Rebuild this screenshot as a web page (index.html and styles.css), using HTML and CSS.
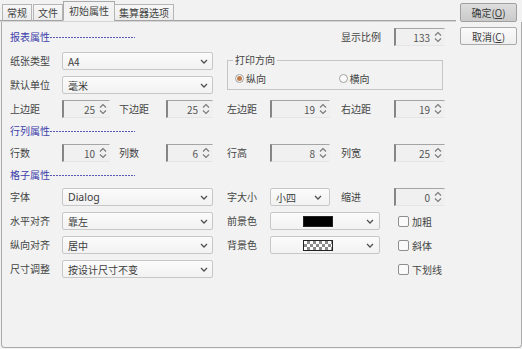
FILE: index.html
```html
<!DOCTYPE html>
<html lang="zh">
<head>
<meta charset="utf-8">
<title>初始属性</title>
<link rel="stylesheet" href="styles.css">
</head>
<body>
<div class="window">
  <div class="tabbar">
    <div class="tabs">
      <div class="tab">常规</div>
      <div class="tab">文件</div>
      <div class="tab active">初始属性</div>
      <div class="tab">集算器选项</div>
    </div>
  </div>

  <div class="buttons">
    <button class="btn default">确定(<u>O</u>)</button>
    <button class="btn">取消(<u>C</u>)</button>
  </div>

  <div class="panel">
    <div class="form">
      <!-- row 0 -->
      <div class="sec r0"><span>报表属性</span><i class="dash"></i></div>
      <div class="lbl c7 r0">显示比例</div>
      <div class="spin c8 r0"><span>133</span><svg class="arr" width="8" height="14" viewBox="0 0 8 14"><path d="M1 5.5L4 2.5L7 5.5M1 8.5L4 11.5L7 8.5"/></svg></div>

      <!-- row 1 -->
      <div class="lbl c1 r1">纸张类型</div>
      <div class="combo c2-4 r1"><span>A4</span><svg class="chev" width="8" height="5" viewBox="0 0 8 5"><path d="M1 1L4 4L7 1"/></svg></div>
      <fieldset class="group">
        <legend>打印方向</legend>
        <div class="radios">
          <label class="radio"><i class="dot on"></i>纵向</label>
          <label class="radio"><i class="dot"></i>横向</label>
        </div>
      </fieldset>

      <!-- row 2 -->
      <div class="lbl c1 r2">默认单位</div>
      <div class="combo c2-4 r2"><span>毫米</span><svg class="chev" width="8" height="5" viewBox="0 0 8 5"><path d="M1 1L4 4L7 1"/></svg></div>

      <!-- row 3 -->
      <div class="lbl c1 r3">上边距</div>
      <div class="spin c2 r3"><span>25</span><svg class="arr" width="8" height="14" viewBox="0 0 8 14"><path d="M1 5.5L4 2.5L7 5.5M1 8.5L4 11.5L7 8.5"/></svg></div>
      <div class="lbl c3 r3">下边距</div>
      <div class="spin c4 r3"><span>25</span><svg class="arr" width="8" height="14" viewBox="0 0 8 14"><path d="M1 5.5L4 2.5L7 5.5M1 8.5L4 11.5L7 8.5"/></svg></div>
      <div class="lbl c5 r3">左边距</div>
      <div class="spin c6 r3"><span>19</span><svg class="arr" width="8" height="14" viewBox="0 0 8 14"><path d="M1 5.5L4 2.5L7 5.5M1 8.5L4 11.5L7 8.5"/></svg></div>
      <div class="lbl c7 r3">右边距</div>
      <div class="spin c8 r3"><span>19</span><svg class="arr" width="8" height="14" viewBox="0 0 8 14"><path d="M1 5.5L4 2.5L7 5.5M1 8.5L4 11.5L7 8.5"/></svg></div>

      <!-- row 4 -->
      <div class="sec r4"><span>行列属性</span><i class="dash"></i></div>

      <!-- row 5 -->
      <div class="lbl c1 r5">行数</div>
      <div class="spin c2 r5"><span>10</span><svg class="arr" width="8" height="14" viewBox="0 0 8 14"><path d="M1 5.5L4 2.5L7 5.5M1 8.5L4 11.5L7 8.5"/></svg></div>
      <div class="lbl c3 r5">列数</div>
      <div class="spin c4 r5"><span>6</span><svg class="arr" width="8" height="14" viewBox="0 0 8 14"><path d="M1 5.5L4 2.5L7 5.5M1 8.5L4 11.5L7 8.5"/></svg></div>
      <div class="lbl c5 r5">行高</div>
      <div class="spin c6 r5"><span>8</span><svg class="arr" width="8" height="14" viewBox="0 0 8 14"><path d="M1 5.5L4 2.5L7 5.5M1 8.5L4 11.5L7 8.5"/></svg></div>
      <div class="lbl c7 r5">列宽</div>
      <div class="spin c8 r5"><span>25</span><svg class="arr" width="8" height="14" viewBox="0 0 8 14"><path d="M1 5.5L4 2.5L7 5.5M1 8.5L4 11.5L7 8.5"/></svg></div>

      <!-- row 6 -->
      <div class="sec r6"><span>格子属性</span><i class="dash"></i></div>

      <!-- row 7 -->
      <div class="lbl c1 r7">字体</div>
      <div class="combo c2-4 r7"><span class="latin">Dialog</span><svg class="chev" width="8" height="5" viewBox="0 0 8 5"><path d="M1 1L4 4L7 1"/></svg></div>
      <div class="lbl c5 r7">字大小</div>
      <div class="combo small c6 r7"><span>小四</span><svg class="chev" width="8" height="5" viewBox="0 0 8 5"><path d="M1 1L4 4L7 1"/></svg></div>
      <div class="lbl c7 r7">缩进</div>
      <div class="spin c8 r7"><span>0</span><svg class="arr" width="8" height="14" viewBox="0 0 8 14"><path d="M1 5.5L4 2.5L7 5.5M1 8.5L4 11.5L7 8.5"/></svg></div>

      <!-- row 8 -->
      <div class="lbl c1 r8">水平对齐</div>
      <div class="combo c2-4 r8"><span>靠左</span><svg class="chev" width="8" height="5" viewBox="0 0 8 5"><path d="M1 1L4 4L7 1"/></svg></div>
      <div class="lbl c5 r8">前景色</div>
      <div class="combo color c6-7 r8"><i class="swatch black"></i><svg class="chev" width="8" height="5" viewBox="0 0 8 5"><path d="M1 1L4 4L7 1"/></svg></div>
      <label class="check c8 r8"><i class="box"></i>加粗</label>

      <!-- row 9 -->
      <div class="lbl c1 r9">纵向对齐</div>
      <div class="combo c2-4 r9"><span>居中</span><svg class="chev" width="8" height="5" viewBox="0 0 8 5"><path d="M1 1L4 4L7 1"/></svg></div>
      <div class="lbl c5 r9">背景色</div>
      <div class="combo color c6-7 r9"><i class="swatch checker"></i><svg class="chev" width="8" height="5" viewBox="0 0 8 5"><path d="M1 1L4 4L7 1"/></svg></div>
      <label class="check c8 r9"><i class="box"></i>斜体</label>

      <!-- row 10 -->
      <div class="lbl c1 r10">尺寸调整</div>
      <div class="combo c2-4 r10"><span>按设计尺寸不变</span><svg class="chev" width="8" height="5" viewBox="0 0 8 5"><path d="M1 1L4 4L7 1"/></svg></div>
      <label class="check c8 r10"><i class="box"></i>下划线</label>
    </div>
  </div>
</div>
</body>
</html>
```

FILE: styles.css
```css
* { box-sizing: border-box; }

html, body {
  margin: 0;
  padding: 0;
  background: #f1f2f1;
}

body {
  font-family: "Noto Sans CJK SC", "Noto Sans", sans-serif;
  font-size: 10px;
  color: #3c3c3c;
}

.window {
  width: 522px;
  height: 349px;
  display: grid;
  grid-template-columns: 456px 66px;
  grid-template-rows: 22px 326px;
  background: #f1f2f1;
}

/* ---------- tabs ---------- */
.tabbar {
  grid-column: 1;
  grid-row: 1;
  height: 22px;
  border-bottom: 1px solid #d3d4d3;
}

.tabs {
  height: 21px;
  display: flex;
  align-items: flex-end;
  padding-left: 2px;
  border-bottom: 1px solid #a2a3a2;
}

.tab {
  height: 17px;
  margin-bottom: -1px;
  padding: 0 4px;
  border: 1px solid #b4b5b4;
  border-bottom: 1px solid #a2a3a2;
  background: linear-gradient(#f7f7f7, #ebeceb);
  line-height: 15px;
  color: #444;
  margin-right: 1px;
}

.tab.active {
  height: 20px;
  margin-right: 0;
  margin-left: -1px;
  padding: 0 5px;
  background: #f1f2f1;
  border-color: #a9aaa9;
  border-bottom: 1px solid #f1f2f1;
  line-height: 17px;
}
.tab.active + .tab { margin-left: -1px; }

/* ---------- buttons ---------- */
.buttons {
  grid-column: 2;
  grid-row: 1 / 3;
  align-self: start;
  z-index: 1;
  display: flex;
  flex-direction: column;
  gap: 5px;
  padding: 3px 0 0 4px;
}

.btn {
  width: 57px;
  height: 18px;
  padding: 0;
  font: inherit;
  color: #3c3c3c;
  border: 1px solid #a9aaa9;
  border-radius: 2px;
  background: linear-gradient(#fafafa, #efefef);
  line-height: 15px;
}

.btn.default {
  height: 19px;
  background: linear-gradient(#dcdddc, #c9cac9);
  border-color: #9fa09f;
}

/* ---------- panel ---------- */
.panel {
  grid-column: 1 / 3;
  grid-row: 2;
  margin-left: 1px;
  border: 1px solid #a9aaa9;
  border-top: none;
  border-radius: 0 0 4px 4px;
}

.form {
  display: grid;
  grid-template-columns: 52px 48px 56px 47px 57px 60px 64px 51px;
  grid-template-rows: 18px 18px 18px 18px 14px 18px 14px 18px 18px 18px 18px;
  row-gap: 6px;
  padding: 6px 0 0 8px;
}

.r0 { grid-row: 1; }
.r1 { grid-row: 2; }
.r2 { grid-row: 3; }
.r3 { grid-row: 4; }
.r4 { grid-row: 5; }
.r5 { grid-row: 6; }
.r6 { grid-row: 7; }
.r7 { grid-row: 8; }
.r8 { grid-row: 9; }
.r9 { grid-row: 10; }
.r10 { grid-row: 11; }

.c1 { grid-column: 1; }
.c2 { grid-column: 2; }
.c3 { grid-column: 3; padding-left: 9px; }
.c4 { grid-column: 4; }
.c5 { grid-column: 5; padding-left: 14px; }
.c6 { grid-column: 6; }
.c7 { grid-column: 7; padding-left: 11px; }
.c8 { grid-column: 8; }
.c2-4 { grid-column: 2 / 5; }
.c6-7 { grid-column: 6 / 8; margin-right: 14px; }

.lbl {
  line-height: 18px;
  white-space: nowrap;
  color: #444;
}

/* section headings */
.sec {
  grid-column: 1 / 5;
  width: 125px;
  display: flex;
  align-items: center;
  color: #3d3dab;
  line-height: 14px;
}
.sec.r0 { line-height: 18px; }
.sec .dash {
  flex: 1;
  height: 1px;
  margin-top: 1px;
  background: repeating-linear-gradient(to right, #5a5ab4 0 2px, transparent 2px 3px);
}

/* spinner */
.spin {
  display: flex;
  align-items: center;
  justify-content: flex-end;
  height: 18px;
  background: #eff0ef;
  border: 1px solid;
  border-color: #a4a5a4 #eff0ef #e4e5e4 #848584;
  border-left-width: 2px;
  color: #555;
  padding-right: 2px;
}
.spin .arr {
  margin-left: 4px;
  fill: none;
  stroke: #7a7a7a;
  stroke-width: 1.2;
}

/* combo */
.combo {
  display: flex;
  align-items: center;
  justify-content: space-between;
  height: 18px;
  padding: 0 4px 0 5px;
  border: 1px solid #c6c7c6;
  border-radius: 2px;
  background: linear-gradient(#fbfbfb, #f1f2f1);
  color: #3c3c3c;
  white-space: nowrap;
}
.combo .chev {
  fill: none;
  stroke: #505050;
  stroke-width: 1.3;
  flex: none;
}
.combo.small { padding-right: 7px; }
.latin { font-family: "Noto Sans", sans-serif; font-size: 10.5px; }

.combo.color {
  padding: 0 5px 0 32px;
}
.swatch {
  display: block;
  width: 30px;
  height: 11px;
  border: 1px solid #222;
}
.swatch.black { background: #000; }
.swatch.checker {
  background-color: #fff;
  background-image:
    linear-gradient(45deg, #8a8a8a 25%, transparent 25%, transparent 75%, #8a8a8a 75%),
    linear-gradient(45deg, #8a8a8a 25%, transparent 25%, transparent 75%, #8a8a8a 75%);
  background-size: 6px 6px;
  background-position: 0 0, 3px 3px;
}

/* print direction group */
.group {
  grid-column: 5 / 9;
  grid-row: 2 / 4;
  align-self: start;
  margin: 2px 2px 0 14px;
  height: 36px;
  padding: 0 0 0 5px;
  border: 1px solid #c4c5c4;
  min-width: 0;
}
.group legend {
  padding: 0 2px;
  line-height: 12px;
  color: #444;
}
.radios {
  display: flex;
  align-items: center;
  height: 18px;
  margin-top: 3px;
  padding-left: 2px;
}
.radio {
  display: flex;
  align-items: center;
  gap: 2px;
  width: 104px;
  color: #444;
}
.dot {
  width: 9px;
  height: 9px;
  border: 1px solid #a0a1a0;
  border-radius: 50%;
  background: #fbfbfb;
  display: flex;
  align-items: center;
  justify-content: center;
}
.dot.on::after {
  content: "";
  width: 5px;
  height: 5px;
  border-radius: 50%;
  background: #bf7c4a;
}

/* checkbox */
.check {
  display: flex;
  align-items: center;
  gap: 3px;
  padding-left: 4px;
  color: #444;
}
.box {
  width: 11px;
  height: 11px;
  border: 1px solid #8d8e8d;
  border-radius: 2px;
  background: #fafafa;
}
```
